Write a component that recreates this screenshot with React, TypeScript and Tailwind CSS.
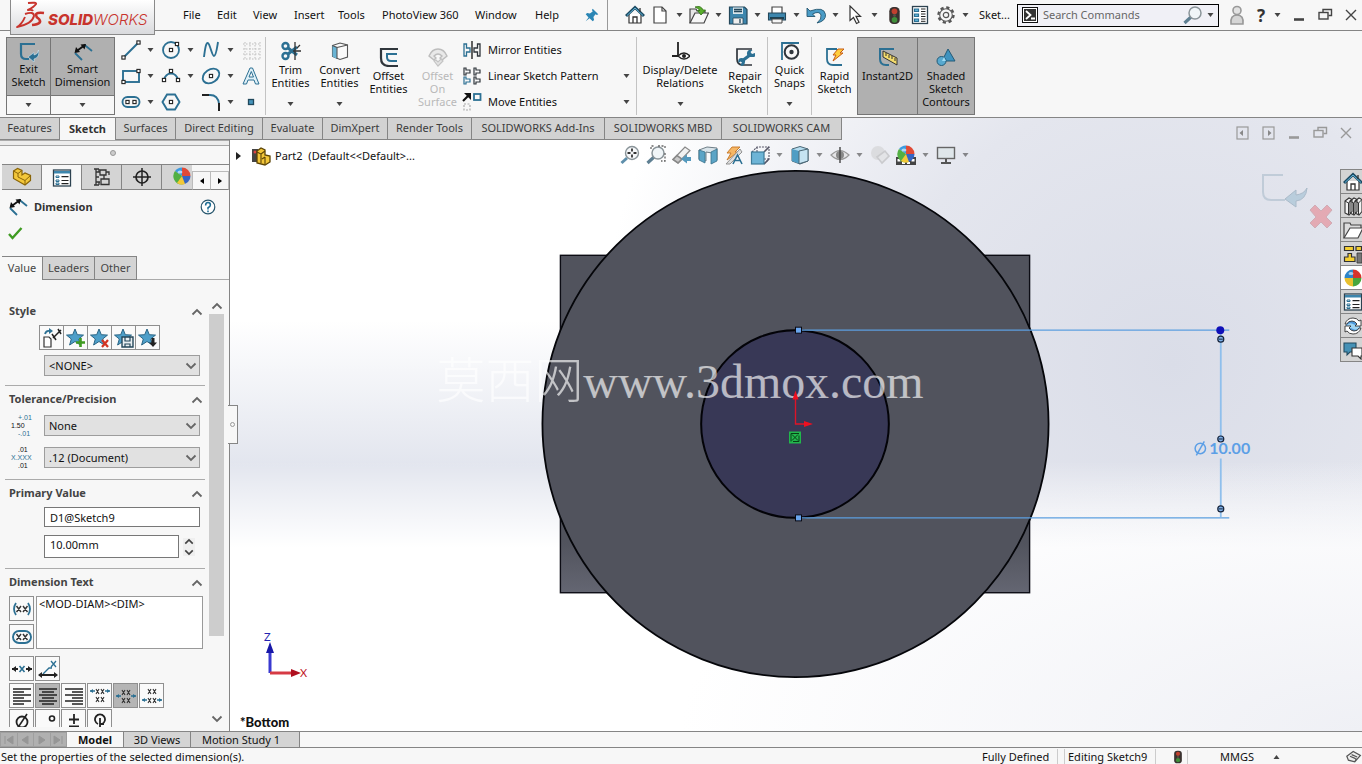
import React from "react";

type Kids = { children?: React.ReactNode };

const B = "#2c7093";
const K = "#30363c";
const L = "#5fb3d9";

function Ic({ s = 20, children, className = "" }: Kids & { s?: number; className?: string }) {
  return (
    <svg width={s} height={s} viewBox="0 0 20 20" fill="none" strokeWidth="1.6" className={"shrink-0 " + className} aria-hidden="true">
      {children}
    </svg>
  );
}

function Caret({ className = "" }: { className?: string }) {
  return (
    <svg width="7" height="4" viewBox="0 0 7 4" className={"shrink-0 " + className} aria-hidden="true">
      <path d="M0.5 0h6L3.5 4z" fill="#444" />
    </svg>
  );
}

const Node = ({ x, y }: { x: number; y: number }) => (
  <rect x={x - 1.6} y={y - 1.6} width="3.2" height="3.2" fill="#fff" stroke="#222" strokeWidth="1.1" />
);

/* ---------- icons ---------- */

const ExitSketch = () => (
  <Ic>
    <path d="M16 2H2v10q0 5 5 5h3" stroke={B} strokeWidth="2.200" />
    <path d="M9 15l6-4.500v2.500q4-.500 4.500-5Q21 15.500 15 17v3z" fill={B} stroke="#cfe6f2" strokeWidth=".6" />
  </Ic>
);
const DimIcon = () => (
  <Ic>
    <path d="M11 2.500l8 6.500M2 11l7 7" stroke={B} strokeWidth="1.800" />
    <path d="M3 9.500L12 3" stroke="#111" strokeWidth="2" />
    <path d="M1.500 11l1.500-6 4 5zM13 2l-1.500 5.500-4-5z" fill="#111" />
  </Ic>
);
const LineI = () => (
  <Ic><path d="M2.500 17.500L17.500 2.500" stroke={B} strokeWidth="2" /><Node x={2.500} y={17.500} /><Node x={17.500} y={2.500} /></Ic>
);
const CircleI = () => (
  <Ic><circle cx="10" cy="10" r="8" stroke={B} strokeWidth="1.800" /><Node x={10} y={10} /><Node x={16} y={4} /></Ic>
);
const SplineI = () => (
  <Ic><path d="M3 17C4 9 5 2 7 3s4 13 6 13 3-8 4-14" stroke={B} strokeWidth="1.900" /></Ic>
);
const GridI = () => (
  <Ic><path d="M4 2v17M9 2v17M14 2v17M19 2v17M2 4h17M2 9h17M2 14h17M2 19h17" stroke="#bdbdbd" strokeWidth="1" strokeDasharray="1.500 1.500" /></Ic>
);
const RectI = () => (
  <Ic><rect x="2" y="5" width="16" height="11" stroke={B} strokeWidth="1.900" /><Node x={2.500} y={16} /><Node x={17.500} y={5} /></Ic>
);
const ArcI = () => (
  <Ic><path d="M3 14A7.200 8.500 0 0 1 17 14" stroke={B} strokeWidth="1.900" /><Node x={3} y={14} /><Node x={17} y={14} /><Node x={10} y={5} /></Ic>
);
const EllipseI = () => (
  <Ic><ellipse cx="10" cy="10" rx="9" ry="6.500" transform="rotate(-35 10 10)" stroke={B} strokeWidth="1.900" /><Node x={10} y={10} /></Ic>
);
const TextI = () => (
  <Ic><path d="M2 18L9 2h2.500l6.500 16h-3.500l-1.500-4H7l-1.500 4zM8 11h4.500L10.300 5.500z" stroke={B} strokeWidth="1" fill="#dff0f8" /></Ic>
);
const SlotI = () => (
  <Ic><rect x="1.500" y="5" width="17" height="10" rx="5" stroke={B} strokeWidth="1.900" /><Node x={6.500} y={10} /><Node x={13.500} y={10} /></Ic>
);
const HexI = () => (
  <Ic><path d="M6 2.500h8L18.500 10 14 17.500H6L1.500 10z" stroke={B} strokeWidth="1.900" /><Node x={10} y={10} /></Ic>
);
const FilletI = () => (
  <Ic><path d="M1 3h8q8 0 9 9" stroke={B} strokeWidth="1.900" /><path d="M1 3h7M18 11v8" stroke="#222" strokeWidth="2" /></Ic>
);
const PointI = () => (
  <Ic><rect x="7.500" y="7.500" width="5" height="5" fill="#4694bb" stroke="#20485c" strokeWidth="1.300" /></Ic>
);
const TrimI = () => (
  <Ic>
    <circle cx="4.500" cy="5" r="3" stroke={B} strokeWidth="2.400" /><circle cx="4.500" cy="15" r="3" stroke={B} strokeWidth="2.400" />
    <path d="M7 7l9 7M7 13l9-7" stroke={B} strokeWidth="3" /><path d="M14 1v18M12 10h8M16 7l3-3" stroke="#333" strokeWidth="1.300" />
  </Ic>
);
const CubeI = ({ side = "#69b4d4" }: { side?: string }) => (
  <Ic>
    <path d="M2.500 4.500L10 2l7.500 2v12L10 18.500 2.500 15.500z" fill="#fafafa" stroke="#555" strokeWidth="1.100" />
    <path d="M7 6l-4.500-1.500v11L7 18z" fill={side} /><path d="M7 6.500L17.500 4M7 6.500V18M2.500 4.500L7 6.500" stroke="#555" strokeWidth="1.100" />
  </Ic>
);
const OffsetI = () => (
  <Ic><path d="M19 2H2v9q0 8 8 8h9" stroke={K} strokeWidth="2.200" /><path d="M18 7H8v3q0 4 4 4h6" stroke={B} strokeWidth="2" /></Ic>
);
const OffSurfI = () => (
  <Ic><path d="M1 9Q4 2 10 2t9 7l-5 4-2-2 2-2q-4-4-8 0l2 2-2 2z" stroke="#bdbdbd" fill="#e9e9e9" strokeWidth="1.400" /><path d="M6 14l4 5 5-5-2-2-3 3-2-2z" stroke="#c4c4c4" fill="#e4e4e4" strokeWidth="1.200" /></Ic>
);
const MirrorI = () => (
  <Ic><path d="M2 4v12h2.500v-4H8V8H4.500V4z" stroke={B} strokeWidth="1.300" /><path d="M18 4v12h-2.500v-4H12V8h3.500V4z" stroke={K} strokeWidth="1.300" /><path d="M10 1v18" stroke="#111" strokeWidth="1.300" /></Ic>
);
const PatternI = () => (
  <Ic>
    <path d="M2 2v7h2V7h4V4H4V2zM12 2v7h2V7h4V4h-4V2zM12 11v7h2v-2h4v-3h-4v-2z" stroke={K} strokeWidth="1.200" />
    <path d="M2 11v7h2v-2h4v-3H4v-2z" stroke={B} strokeWidth="1.200" />
  </Ic>
);
const MoveI = () => (
  <Ic><path d="M1 9l5-5" stroke="#111" strokeWidth="2.200" /><path d="M2 1h7v7z" fill="#111" /><rect x="12" y="2" width="6.500" height="6" stroke={B} strokeWidth="1.800" /><rect x="2" y="12" width="6" height="6" stroke="#aaa" strokeWidth="1.200" strokeDasharray="2 1.500" /></Ic>
);
const RelI = () => (
  <Ic><path d="M8 1v14M2 15h8" stroke="#222" strokeWidth="1.800" /><path d="M8 15q6-6 12 0-6 6-12 0z" fill="#fff" stroke="#222" strokeWidth="1.300" /><circle cx="14" cy="15" r="2" fill="#222" /></Ic>
);
const RepairI = () => (
  <Ic><path d="M17 2H2v10q0 6 6 6h9" stroke={K} strokeWidth="1.700" /><path d="M7 14l8-6" stroke={B} strokeWidth="3.200" /><path d="M20 6l-3 1-1.500-2 2-2q-5-1-5.500 3t5 4 3-4zM3.500 16q-1-5 3-5t3.500 4-3.500 4l-1-1.500 1.500-2-1.500-1z" fill={B} /></Ic>
);
const SnapI = () => (
  <Ic><path d="M2 19V2h17" stroke={B} strokeWidth="1.800" /><circle cx="11.500" cy="11" r="6.800" stroke={K} strokeWidth="2" /><circle cx="11.500" cy="11" r="2.200" fill={K} /></Ic>
);
const RapidI = () => (
  <Ic><path d="M12 2H2v10q0 6 6 6h9" stroke={B} strokeWidth="1.800" /><path d="M13 2h6l-4 4h3L8 14l3-6H8z" fill="#ffce3d" stroke="#c75a12" strokeWidth="1" /></Ic>
);
const InstI = () => (
  <Ic><path d="M16 2H2v10q0 6 6 6h3" stroke={B} strokeWidth="2" /><path d="M5 4v6l14 8v-7z" fill="#f4dc6c" stroke="#333" strokeWidth="1" /><path d="M8 6v3M11 8v3M14 9v3M17 11v3" stroke="#333" strokeWidth="1" /></Ic>
);
const ShadedI = () => (
  <Ic><path d="M12 2l7 12H6z" fill="#3f93bf" stroke="#245a76" strokeWidth="1" /><circle cx="5.500" cy="14" r="4.500" fill="#58a9cf" stroke="#245a76" strokeWidth="1" /><path d="M8 10l2 4H6z" fill="#9edcf5" /></Ic>
);
const HomeI = () => (
  <Ic><path d="M4 9v9h12V9" fill="#fff" stroke="#333" strokeWidth="1.200" /><path d="M1 11l9-8.500 9 8.500" stroke="#1c4a62" strokeWidth="3" /><path d="M2 10.500l8-7.500 8 7.500" stroke={L} strokeWidth="1" /><path d="M8 18v-6h4v6M15 3v4" stroke="#333" strokeWidth="1.300" /></Ic>
);
const NewI = () => (
  <Ic><path d="M4 2h8l4 4v12H4z" fill="#fff" stroke="#444" strokeWidth="1.200" /><path d="M12 2v4h4" stroke="#444" strokeWidth="1.200" /></Ic>
);
const OpenI = () => (
  <Ic><path d="M1 18V4h6l1 2h8v3" fill="#e6e6e6" stroke="#444" strokeWidth="1.200" /><path d="M1 18L6 8h13.500L15 18z" fill="#f7f7f7" stroke="#444" strokeWidth="1.200" /><path d="M6 2q6-2 8 3h2.500L12 10 8.500 5.500H11Q9 3 6 2z" fill="#59ae2c" stroke="#2f6d14" strokeWidth=".8" /></Ic>
);
const SaveI = () => (
  <Ic><path d="M1.500 2h15L19 4.500V19H1.500z" fill="#3d86ad" stroke="#24475a" strokeWidth="1.200" /><path d="M5 2.500h10V9H5z" fill="#d9e6ec" /><path d="M5 13h10v6H5z" fill="#eee" stroke="#24475a" strokeWidth=".8" /><path d="M12 14v4M6 4.500h8M6 6.500h8" stroke="#24475a" strokeWidth="1.300" /></Ic>
);
const PrintI = () => (
  <Ic><path d="M5 8V2h10v6" fill="#fff" stroke="#444" strokeWidth="1.200" /><path d="M1.500 8h17v7h-17z" fill="#3d86ad" stroke="#24475a" strokeWidth="1.100" /><path d="M3 13h14" stroke="#122a36" strokeWidth="1.500" /><path d="M5 14h10v4H5z" fill="#f5f5f5" stroke="#444" strokeWidth="1" /></Ic>
);
const UndoI = () => (
  <Ic><path d="M1 3v8.500h8L6.500 9q7-3.500 8.500 1 1 4-4 8 9-2 8.500-8.500Q18 1 4 6z" fill="#4a9cc7" stroke="#24566f" strokeWidth=".9" /></Ic>
);
const CursorI = () => (
  <Ic><path d="M5 1v14.500l3.500-3 3 6 2.500-1.200-3-6h4.500z" fill="#fff" stroke="#333" strokeWidth="1.200" /></Ic>
);
const TrafficI = ({ s = 20 }: { s?: number }) => (
  <Ic s={s}><rect x="4.500" y="1" width="11" height="18" rx="4.500" fill="#3a3230" /><circle cx="10" cy="5.500" r="3" fill="#c2402f" /><circle cx="10" cy="10" r="1.500" fill="#5a5046" /><circle cx="10" cy="14.500" r="3" fill="#3f8f3a" /></Ic>
);
const ListI = ({ s = 20 }: { s?: number }) => (
  <Ic s={s}><rect x="1.500" y="2" width="17" height="16" fill="#fff" stroke="#2d4250" strokeWidth="1.300" /><path d="M2 3h16v2.500H2z" fill="#3d86ad" /><path d="M4 8h3v1.500H4zM4 12h3v1.500H4zM4 15h3v1.500H4z" stroke={B} strokeWidth="1" /><path d="M9.500 8.700h7M9.500 12.500h7M9.500 15.700h7" stroke="#222" strokeWidth="1.200" /></Ic>
);
const PropsI = () => (
  <Ic><rect x="2.500" y="1.500" width="15" height="17" fill="#fff" stroke="#2d4250" strokeWidth="1.300" /><path d="M4.500 4h4v2.500h-4zM4.500 9h4v2.500h-4zM4.500 14h4v2.500h-4z" fill={L} stroke={B} strokeWidth="1.200" /><path d="M11 4h4.500M11 6.500h4.500M11 9h4.500M11 11.500h4.500M11 14h4.500M11 16.300h4.500" stroke="#222" strokeWidth="1" /></Ic>
);
const GearI = () => (
  <Ic><circle cx="10" cy="10" r="7.500" stroke="#555" strokeWidth="2.400" strokeDasharray="3.200 2.690" /><circle cx="10" cy="10" r="6.300" fill="#f7f7f7" stroke="#555" strokeWidth="1.100" /><circle cx="10" cy="10" r="2.700" stroke="#555" strokeWidth="1.200" /></Ic>
);
const PinI = () => (
  <Ic s={14}><path d="M11 1l8 8-2 1-2-1-3 4 1 4-2 2-4.500-4.500L1 19l4-5.500L1 9l2-2 4 1 4-3-1-2z" fill="#2b86b5" /></Ic>
);
const MagI = ({ dashed = false }: { dashed?: boolean }) => (
  <Ic><path d="M8 12l-6.500 6" stroke="#5e7f92" strokeWidth="3.200" /><circle cx="12" cy="8" r="6" fill="#f0f5f8" stroke="#8a9499" strokeWidth="1.500" />{dashed && <path d="M5 4V1h3M12 1h7v3M19 8v8h-4" stroke="#666" strokeWidth="1.300" strokeDasharray="2 1.500" />}</Ic>
);
const ZoomFitI = () => (
  <Ic><path d="M7 13l-5.500 5" stroke="#5e8fab" strokeWidth="3" /><circle cx="12" cy="8" r="6.500" fill="#f6f8fa" stroke="#8a9499" strokeWidth="1.400" /><path d="M12 3.500v3M12 9.500v3M7.500 8h3M13.500 8h3" stroke="#333" strokeWidth="1.800" /></Ic>
);
const PrevViewI = () => (
  <Ic><path d="M1 14.500L13 2l5 3.500L6 18z" fill="#f2f2f2" stroke="#888" strokeWidth="1.200" /><path d="M1 14.500l4-4 5 3.500-4 4z" fill="#c9c9c9" stroke="#888" /><path d="M9 14l6-4.500V12h4v4h-4v2.500z" fill="#5599bd" /></Ic>
);
const SectionI = () => (
  <Ic><path d="M1 5l8-3 10 1v12l-5 3V8L8 7v9l-7-2z" fill="#d9e4ea" stroke="#6f7e87" strokeWidth="1" /><path d="M1 5l6 2v11l-6-3zM13 7l6-3v12l-6 3z" fill="#5ba4c6" stroke="#39718c" strokeWidth=".8" /></Ic>
);
const DynI = () => (
  <Ic><path d="M8 2h8l-5 5h3L3 15l4-7H3z" fill="#f6b765" stroke="#c47524" strokeWidth=".9" /><path d="M2 19L16 4l2 3L6 19z" fill="#ddd" stroke="#888" strokeWidth=".9" /><path d="M9 19l4.500-9 4.500 9M11 15.500h5" stroke={B} strokeWidth="1.600" /></Ic>
);
const OrientI = () => (
  <Ic><path d="M2 7l5-5h12v12l-5 5M7 2v5M14 14h5" stroke="#556" strokeWidth="1.100" strokeDasharray="2 1" /><path d="M14 7l5-5M19 14l-5 5" stroke="#556" /><rect x="1.500" y="7" width="12.500" height="12" fill="#6db4d6" stroke="#3f7c99" strokeWidth="1.200" /></Ic>
);
const StyleCubeI = () => (
  <Ic><path d="M2 4l8-2.500L18 4v12l-8 3-8-3z" fill="#b4dcef" stroke="#4a6674" strokeWidth="1" /><path d="M2 4l7 2v12.500L2 16z" fill="#4f9dc4" /><path d="M9 6l9-2v12l-9 2.800z" fill="#c6e4f2" stroke="#4a6674" strokeWidth="1" /></Ic>
);
const EyeI = () => (
  <Ic><path d="M1 10q9-9 18 0-9 9-18 0z" fill="#e4e4e6" stroke="#999" strokeWidth="1.200" /><circle cx="10" cy="10" r="4" fill="#888" /><path d="M10 2v16" stroke="#444" strokeWidth="1.400" /></Ic>
);
const BallI = ({ s = 20, strip = false }: { s?: number; strip?: boolean }) => (
  <Ic s={s}>
    {strip && <path d="M0 12h20v8H0z" fill="#444" />}
    {strip && <path d="M1.500 14h3v2.500h-3zM6 17h3v2H6zM11 17h3v2h-3zM15.500 14h3v2.500h-3z" fill="#fff" />}
    <path d="M10 9L3 4a8.500 8.500 0 0 1 7-3.500z" fill="#3d9be0" /><path d="M10 9V.5A8.500 8.500 0 0 1 18.500 9z" fill="#e04a36" />
    <path d="M10 9h8.500A8.500 8.500 0 0 1 10 17.500z" fill="#3565c4" /><path d="M10 9v8.500A8.500 8.500 0 0 1 3 4z" fill="#52b043" /><path d="M10 9l3 8a8.500 8.500 0 0 1-8-1z" fill="#f2c838" />
    <ellipse cx="8" cy="5" rx="2.500" ry="1.600" fill="#fff" opacity=".6" />
  </Ic>
);
const PaneBallI = () => (
  <Ic><path d="M10 10V1.500a8.500 8.500 0 0 0-8.500 8.500z" fill="#2f86c9" /><path d="M10 10V1.500a8.500 8.500 0 0 1 8.500 8.500z" fill="#d5342b" /><path d="M10 10h8.500a8.500 8.500 0 0 1-8.500 8.500z" fill="#46a63d" /><path d="M10 10H1.500a8.500 8.500 0 0 0 8.500 8.500z" fill="#e8c02e" /><ellipse cx="8" cy="5.500" rx="2.500" ry="1.600" fill="#fff" opacity=".6" /></Ic>
);
const GhostI = () => (
  <Ic className="opacity-50"><circle cx="8" cy="8" r="7" fill="#ccc" /><path d="M7 12l8-6 4 5-7 7z" fill="#ddd" stroke="#aaa" /></Ic>
);
const ScreenI = () => (
  <Ic><rect x="1.500" y="2.500" width="17" height="11" fill="#dfe6ea" stroke="#666" strokeWidth="1.400" /><path d="M10 14v3M5 18h10" stroke="#555" strokeWidth="2" /></Ic>
);
const PartI = () => (
  <Ic><path d="M1.500 4l4-2.500L10 3.500V8l3-2 5.500 2.500v5L13 18 1.500 11.500z" fill="#f3c73a" stroke="#8a6508" strokeWidth="1.200" /><path d="M1.500 4L6 6.500 10 3.500M6 6.500V10l7 3.500 5.500-5M13 13.500V18" stroke="#8a6508" strokeWidth="1" /></Ic>
);
const PartTreeI = () => (
  <Ic><path d="M1 3h6v13H1z" fill="#444" /><circle cx="4" cy="6" r="1.500" fill="#d44" /><path d="M6 5l4-3 4 2v5l5 1v6l-5 3-8-2z" fill="#f3c73a" stroke="#5c4406" strokeWidth="1.300" /><path d="M6 6l4 2v9M10 8l4-3M14 11l-3 2M14 11v7" stroke="#5c4406" strokeWidth="1.100" /></Ic>
);
const TreeI = () => (
  <Ic><path d="M4 2v16M2 2h5M2 18h5M7 2v3M4 10h3M7 15v3M4 5h4M4 15h4" stroke="#333" strokeWidth="1.300" /><path d="M8 3h6v5H8zM9 12h8v5.500H9zM14 5h3v3M12 8v4" stroke="#333" strokeWidth="1.300" /></Ic>
);
const TargetI = () => (
  <Ic><circle cx="10" cy="10" r="6" stroke="#222" strokeWidth="1.700" /><path d="M10 1v18M1 10h18" stroke="#222" strokeWidth="1.500" /></Ic>
);
const HelpI = () => (
  <Ic s={16}><circle cx="10" cy="10" r="8.500" fill="#fff" stroke="#27566d" strokeWidth="1.500" /><path d="M7 8q0-3.500 3-3.500T13 7.500q0 2-3 3.500v2M10 14.500v2" stroke="#1d6d94" strokeWidth="1.900" /></Ic>
);
const star = "M9 1l2.300 5.700 6.200.4-4.800 3.900 1.700 6L9 13.500 3.600 17l1.700-6L.5 7.100l6.200-.4z";
const StarI = ({ children }: Kids) => (
  <Ic><path d={star} fill="#4e9fc9" stroke="#2a6585" strokeWidth="1" />{children}</Ic>
);
const BooksI = () => (
  <Ic><path d="M2 5l4-3 3 1.500v12L6 19l-4-2zM7 5l4-3 3 1.500v12L11 19l-4-2zM12 5l4-3 3 1.500v12L16 19l-4-2z" fill="#f2f2f2" stroke="#333" strokeWidth="1.100" /><path d="M2 5l3.500 2L9 3.500M5.500 7v11.500M7 5l3.500 2L14 3.500M10.500 7v11.500M12 5l3.500 2L19 3.500M15.500 7v11.500" stroke="#333" strokeWidth="1" /></Ic>
);
const FolderI = () => (
  <Ic><path d="M1 18V3h6l1 2h10v3" fill="#dcdcdc" stroke="#444" strokeWidth="1.200" /><path d="M1 18L7 8h13l-5 10z" fill="#fff" stroke="#444" strokeWidth="1.200" /></Ic>
);
const PaletteI = () => (
  <Ic><path d="M1.500 2.500h9v4h-9zM13 2.500h5.500v4H13zM5 9.500h3.500V13H12v4.500H1.500V13H5z" fill="#f5d033" stroke="#333" strokeWidth="1.200" /><path d="M14 9h5v10h-5z" fill="#777" stroke="#333" strokeWidth=".8" /></Ic>
);
const SyncI = () => (
  <Ic><circle cx="10" cy="10" r="7" fill="#4d97d8" /><path d="M4 9q3-3 6-1t6 0v4q-3 3-6 1t-6 0z" fill="#9fd4f2" /><path d="M2 8q2-6 8-6 4 0 6 3l2-1v6h-6l2-2q-2-3-5-3-4 0-5 3zM18 12q-2 6-8 6-4 0-6-3l-2 1v-6h6l-2 2q2 3 5 3 4 0 5-3z" fill="#fff" stroke="#333" strokeWidth=".9" /></Ic>
);
const ChatI = () => (
  <Ic><path d="M1 3h12v9H7l-3 3v-3H1z" fill="#4591b5" stroke="#234b5f" strokeWidth="1.100" /><path d="M9 8h10v8h-1v3l-3-3H9z" fill="#fff" stroke="#333" strokeWidth="1.100" /></Ic>
);

/* ---------- ribbon parts ---------- */

function BigTool({ icon, lines, caret = false, className = "", active = false, muted = false }: { icon: React.ReactNode; lines: string[]; caret?: boolean; className?: string; active?: boolean; muted?: boolean }) {
  return (
    <button
      type="button"
      className={
        "flex h-[78px] shrink-0 flex-col items-center text-[11px] leading-[13px] " +
        (caret ? "pt-1 " : active ? "border border-[#757575] bg-[#b0b0b0] pt-[9px] " : "pt-[10px] ") +
        (muted ? "text-[#b9b9b9] " : "") + className
      }
    >
      {icon}
      <span className="mt-0.5 flex flex-col items-center">
        {lines.map((t) => <span key={t} className="whitespace-nowrap">{t}</span>)}
      </span>
      {caret && <Caret className="mt-auto mb-[9px]" />}
    </button>
  );
}

function SplitTool({ icon, lines, className }: { icon: React.ReactNode; lines: string[]; className: string }) {
  return (
    <div className={"flex h-[78px] shrink-0 flex-col border border-[#757575] text-[11px] leading-[13px] " + className}>
      <button type="button" className="flex h-[58px] flex-col items-center border-b border-[#757575] bg-[#b0b0b0] pt-1">
        {icon}
        {lines.map((t) => <span key={t}>{t}</span>)}
      </button>
      <button type="button" aria-label={lines.join(" ") + " options"} className="flex flex-1 items-center justify-center"><Caret /></button>
    </div>
  );
}

const Rule = () => <div className="h-[78px] w-px shrink-0 bg-[#c3c3c3]" />;

const sketchTools: [string, React.ReactNode, boolean][] = [
  ["Line", <LineI />, true], ["Circle", <CircleI />, true], ["Spline", <SplineI />, true], ["Grid", <GridI />, false],
  ["Rectangle", <RectI />, true], ["Arc", <ArcI />, true], ["Ellipse", <EllipseI />, true], ["Text", <TextI />, false],
  ["Slot", <SlotI />, true], ["Polygon", <HexI />, false], ["Fillet", <FilletI />, true], ["Point", <PointI />, false],
];

function Ribbon() {
  return (
    <div className="flex h-[87px] shrink-0 items-start border-b border-[#858585] bg-[#f7f7f7] pt-1.5 pl-1.5">
      <SplitTool icon={<ExitSketch />} lines={["Exit", "Sketch"]} className="w-[45px]" />
      <SplitTool icon={<DimIcon />} lines={["Smart", "Dimension"]} className="-ml-px w-[65px]" />
      <div className="ml-1.5 grid h-[78px] w-[144px] shrink-0 grid-cols-[40px_40px_40px_24px] grid-rows-3">
        {sketchTools.map(([name, icon, caret]) => (
          <button key={name} type="button" aria-label={name} className="flex items-center gap-1.5">
            {icon}{caret && <Caret />}
          </button>
        ))}
      </div>
      <Rule />
      <BigTool icon={<TrimI />} lines={["Trim", "Entities"]} caret className="w-[49px]" />
      <BigTool icon={<CubeI />} lines={["Convert", "Entities"]} caret className="w-[49px]" />
      <BigTool icon={<OffsetI />} lines={["Offset", "Entities"]} className="w-[49px]" />
      <BigTool icon={<OffSurfI />} lines={["Offset", "On", "Surface"]} muted className="w-[49px]" />
      <div className="grid h-[78px] w-[174px] shrink-0 grid-rows-3 text-[11px]">
        {([["Mirror Entities", <MirrorI />, false], ["Linear Sketch Pattern", <PatternI />, true], ["Move Entities", <MoveI />, true]] as [string, React.ReactNode, boolean][]).map(([t, i, c]) => (
          <button key={t} type="button" className="flex items-center gap-1.5 pr-1.5 whitespace-nowrap">
            {i}<span>{t}</span>{c && <Caret className="ml-auto" />}
          </button>
        ))}
      </div>
      <Rule />
      <BigTool icon={<RelI />} lines={["Display/Delete", "Relations"]} caret className="w-[86px]" />
      <BigTool icon={<RepairI />} lines={["Repair", "Sketch"]} className="w-[44px]" />
      <Rule />
      <BigTool icon={<SnapI />} lines={["Quick", "Snaps"]} caret className="w-[43px]" />
      <Rule />
      <BigTool icon={<RapidI />} lines={["Rapid", "Sketch"]} className="w-[45px]" />
      <BigTool icon={<InstI />} lines={["Instant2D"]} active className="w-[61px]" />
      <BigTool icon={<ShadedI />} lines={["Shaded", "Sketch", "Contours"]} active className="-ml-px w-[58px]" />
    </div>
  );
}

/* ---------- title bar ---------- */

function Logo() {
  return (
    <div className="absolute top-0 left-2.5 z-20 flex h-[35px] w-[145px] items-center border border-t-0 border-[#8a8a8a] bg-linear-to-b from-white to-[#d9dadd] pl-1 text-[#c8332c]">
      <svg width="32" height="32" viewBox="0 0 32 32" fill="none" stroke="#c8332c" strokeWidth="2" strokeLinejoin="round" aria-hidden="true">
        <path d="M13 2q9-1 8 1-2 3-8 6 4-1 5 1" strokeWidth="2" /><path d="M10 13q9-3 9 2-2 8-17 11 5-3 8-10" strokeWidth="1.900" />
        <path d="M29 12q-8-1-8 2 0 2 3 4 4 5-7 6" strokeWidth="2.600" />
      </svg>
      <span className="pt-1 pl-px font-['Inter','Liberation_Sans',sans-serif] text-[15px] leading-none italic"><b className="font-extrabold">SOLID</b><span className="font-light">WORKS</span></span>
    </div>
  );
}

const menus = [
  ["File", "w-[34px]"], ["Edit", "w-[36px]"], ["View", "w-[41px]"], ["Insert", "w-[44px]"], ["Tools", "w-[44px]"],
  ["PhotoView 360", "w-[93px]"], ["Window", "w-[60px]"], ["Help", "w-[50px]"],
];

const quick: [string, React.ReactNode][] = [
  ["New", <NewI />], ["Open", <OpenI />], ["Save", <SaveI />], ["Print", <PrintI />], ["Undo", <UndoI />], ["Select", <CursorI />],
];

function WinButtons({ color }: { color: string }) {
  return (
    <svg width="66" height="14" viewBox="0 0 66 14" fill="none" stroke={color} strokeWidth="1.400" aria-hidden="true">
      <path d="M1 11.500h10" strokeWidth="2.600" /><path d="M30 4V1.500h8.500v6H35.500" /><rect x="26" y="4.500" width="9" height="6.500" /><path d="M53 2l10 10M63 2L53 12" />
    </svg>
  );
}

function TitleBar() {
  return (
    <header className="relative flex h-[31px] shrink-0 items-center border-b border-[#858585] bg-[#f7f7f7] text-[11px]">
      <Logo />
      <nav className="flex h-full w-[608px] shrink-0 items-center border-r border-[#999] pl-[183px]">
        {menus.map(([m, w]) => <button key={m} type="button" className={"text-left whitespace-nowrap " + w}>{m}</button>)}
        <button type="button" aria-label="Pin menu"><PinI /></button>
      </nav>
      <div className="flex items-center pl-[17px]">
        <button type="button" aria-label="Home" className="mr-[5px]"><HomeI /></button>
        {quick.map(([n, i]) => (
          <button key={n} type="button" aria-label={n} className="flex w-[39px] items-center gap-1.5">{i}<Caret /></button>
        ))}
        <button type="button" aria-label="Rebuild" className="ml-px"><TrafficI s={19} /></button>
        <button type="button" aria-label="File properties" className="ml-1.5"><PropsI /></button>
        <button type="button" aria-label="Options" className="ml-1.5 flex w-[39px] items-center gap-1.5"><GearI /><Caret /></button>
        <span className="ml-1 whitespace-nowrap">Sket...</span>
      </div>
      <div className="ml-auto flex items-center">
        <label className="flex h-[23px] w-[202px] items-center border border-black bg-[#f0f0f6] pr-1 pl-1">
          <svg width="16" height="16" viewBox="0 0 16 16" fill="none" aria-hidden="true"><rect x=".5" y=".5" width="15" height="15" fill="#fff" stroke="#111" /><rect x="2" y="2" width="12" height="12" fill="#333" /><path d="M4 4l4.500 4L4 12M9 11.500h4" stroke="#fff" strokeWidth="1.800" /></svg>
          <input aria-label="Search Commands" placeholder="Search Commands" className="ml-[5px] min-w-0 flex-1 bg-transparent outline-none placeholder:text-[#666]" />
          <MagI /><Caret className="ml-1" />
        </label>
        <button type="button" aria-label="Account" className="ml-2">
          <Ic><path d="M4 19q-1-9 6-9t6 9z" fill="#d5d5d5" stroke="#999" /><circle cx="10" cy="5.500" r="4" fill="#e2e2e2" stroke="#999" /></Ic>
        </button>
        <button type="button" aria-label="Help menu" className="ml-2.5 flex items-center gap-[9px] text-[17px] leading-none font-bold text-[#333]">?<Caret /></button>
        <div className="ml-3 pr-[3px]"><WinButtons color="#444" /></div>
      </div>
    </header>
  );
}

/* ---------- command tabs ---------- */

const tabs = [
  ["Features", "w-[60px]"], ["Sketch", "w-[56px]"], ["Surfaces", "w-[60px]"], ["Direct Editing", "w-[87px]"], ["Evaluate", "w-[60px]"], ["DimXpert", "w-[65px]"],
  ["Render Tools", "w-[84px]"], ["SOLIDWORKS Add-Ins", "w-[133px]"], ["SOLIDWORKS MBD", "w-[117px]"], ["SOLIDWORKS CAM", "w-[120px]"],
];

function CommandTabs() {
  return (
    <div className="flex h-[22px] shrink-0 items-stretch text-[11px]">
      {tabs.map(([t, w]) => (
        <button key={t} type="button" className={w + " shrink-0 border-r border-[#858585] whitespace-nowrap " + (t === "Sketch" ? "bg-[#f7f7f7] font-bold text-[#333]" : "border-b bg-[#d2d2d2] text-[#3c3c3c]")}>{t}</button>
      ))}
      <div className="ml-auto flex items-center gap-3 pt-2 pr-2">
        <svg width="40" height="14" viewBox="0 0 40 14" fill="none" stroke="#999" strokeWidth="1.200" aria-hidden="true">
          <rect x="1" y="1" width="11" height="12" /><rect x="27" y="1" width="11" height="12" /><path d="M7 4v6L3.500 7zM32 4v6l3.500-3z" fill="#888" stroke="none" />
        </svg>
        <WinButtons color="#999" />
      </div>
    </div>
  );
}

/* ---------- property manager ---------- */

const Chevron = ({ down = false, className = "" }: { down?: boolean; className?: string }) => (
  <svg width="12" height="8" viewBox="0 0 12 8" fill="none" stroke="#666" strokeWidth="1.800" className={"shrink-0 " + className} aria-hidden="true">
    <path d={down ? "M1.500 1.500L6 6l4.500-4.500" : "M1.500 6.500L6 2l4.500 4.500"} />
  </svg>
);

function Group({ title, first = false, children }: Kids & { title: string; first?: boolean }) {
  return (
    <section className={"ml-[5px] mr-1 " + (first ? "" : "border-t border-[#ababab]")}>
      <button type="button" className="flex h-[27px] w-full items-center justify-between pr-0.5 pl-1 text-[11px] font-bold text-[#444]">
        {title}<Chevron />
      </button>
      {children}
    </section>
  );
}

function Drop({ value, label, className = "" }: { value: string; label: string; className?: string }) {
  return (
    <div className={"relative w-[156px] " + className}>
      <select aria-label={label} defaultValue={value} className="block h-[21px] w-full appearance-none rounded-none border border-[#9d9d9d] bg-[#e1e1e1] px-1 text-[11px] leading-[18px]">
        <option>{value}</option>
      </select>
      <Chevron down className="pointer-events-none absolute top-[7px] right-[3px]" />
    </div>
  );
}

function Sq({ label, on = false, className = "", children }: Kids & { label: string; on?: boolean; className?: string }) {
  return (
    <button type="button" aria-label={label} className={"flex size-[25px] shrink-0 items-center justify-center border border-[#8f8f8f] " + (on ? "bg-[#b5b5b5] " : "bg-[#fafafa] ") + className}>
      {children}
    </button>
  );
}

const Align = ({ d }: { d: string }) => <Ic><path d={d} stroke="#222" strokeWidth="1.700" /></Ic>;

const XX = ({ a, b, arrows }: { a: number; b: number; arrows: number }) => (
  <Ic>
    <g stroke="#333" strokeWidth="1.100">
      <path d={`M6 ${a}l3 5M9 ${a}l-3 5M11 ${a}l3 5M14 ${a}l-3 5`} /><path d={`M6 ${b}l3 5M9 ${b}l-3 5M11 ${b}l3 5M14 ${b}l-3 5`} />
    </g>
    <path d={`M0 ${arrows}h5M15 ${arrows}h5`} stroke={B} strokeWidth="1.400" /><path d={`M3 ${arrows - 2}v4l-3-2zM17 ${arrows - 2}v4l3-2z`} fill={B} />
  </Ic>
);

/* Three-line numeral glyph shown beside the tolerance drop-downs. */
function NumberGlyph({ rows }: { rows: [string, boolean][] }) {
  return (
    <svg width="39" height="25" viewBox="0 0 39 25" className="shrink-0" aria-hidden="true">
      {rows.map(([t, blue], i) => (
        <text key={i} x={i === 1 ? 6 : 13} y={7 + i * 8} className={"font-['Liberation_Sans',sans-serif] text-[7px] " + (blue ? "fill-[#2c7093]" : "fill-[#111]")}>{t}</text>
      ))}
    </svg>
  );
}

function PropertyManager() {
  return (
    <aside className="relative flex w-[230px] shrink-0 flex-col border-r border-[#858585] bg-[#f7f7f7]">
      <div className="flex h-5 shrink-0 items-center justify-center border-t border-[#aaa] pr-1 shadow-[inset_0_4px_0_#ececec,inset_0_5px_0_#a5a5a5]">
        <span className="mt-1 size-1.5 rounded-full border border-[#999] bg-[#ccc]" />
      </div>
      <div className="mt-1 ml-0.5 flex h-[26px] shrink-0 items-stretch overflow-hidden border-t border-[#858585]">
        <button type="button" aria-label="Feature tree" className="flex w-10 shrink-0 items-center justify-center border-r border-b border-[#858585] bg-[#d4d4d4]"><PartI /></button>
        <button type="button" aria-label="Properties" className="flex w-10 shrink-0 items-center justify-center border-r border-[#858585]"><ListI /></button>
        <button type="button" aria-label="Configurations" className="flex w-10 shrink-0 items-center justify-center border-r border-b border-[#858585] bg-[#d4d4d4]"><TreeI /></button>
        <button type="button" aria-label="DimXpert manager" className="flex w-10 shrink-0 items-center justify-center border-r border-b border-[#858585] bg-[#d4d4d4]"><TargetI /></button>
        <button type="button" aria-label="Display manager" className="flex w-[30px] shrink-0 items-center justify-end border-b border-[#858585] bg-[#d4d4d4]"><BallI /></button>
        <button type="button" aria-label="Previous tabs" className="mt-1.5 flex w-[19px] shrink-0 items-center justify-center border border-[#bbb] border-b-[#858585] bg-[#f7f7f7]"><svg width="4" height="6" viewBox="0 0 4 6"><path d="M4 0v6L0 3z" /></svg></button>
        <button type="button" aria-label="Next tabs" className="mt-1.5 flex flex-1 items-center justify-center border border-l-0 border-[#bbb] border-b-[#858585] bg-[#f7f7f7]"><svg width="4" height="6" viewBox="0 0 4 6"><path d="M0 0v6l4-3z" /></svg></button>
      </div>
      <div className="mt-1.5 flex h-[22px] shrink-0 items-center pr-[13px] pl-2">
        <DimIcon /><h2 className="ml-1.5 text-[11px] font-bold text-[#333]">Dimension</h2>
        <button type="button" aria-label="Help" className="ml-auto"><HelpI /></button>
      </div>
      <button type="button" aria-label="OK" className="mt-2 ml-2 w-4 shrink-0">
        <svg width="15" height="14" viewBox="0 0 15 14" fill="none" stroke="#3f9b22" strokeWidth="2.400"><path d="M1 8l3.500 4L13.500 2" /></svg>
      </button>
      <div className="mt-4 ml-0.5 flex h-6 shrink-0 items-stretch text-[11px] text-[#444]">
        <button type="button" className="w-[41px] border-t border-r border-[#858585]">Value</button>
        <button type="button" className="w-[52px] border border-l-0 border-[#858585] bg-[#d4d4d4]">Leaders</button>
        <button type="button" className="w-[42px] border border-l-0 border-[#858585] bg-[#d4d4d4]">Other</button>
        <span className="flex-1 border-b border-[#aaa]" />
      </div>
      <div className="mt-[18px] mb-1 flex min-h-0 flex-1">
        <div className="w-[209px] shrink-0 overflow-hidden">
          <Group title="Style" first>
            <div className="ml-[34px] flex">
              <Sq label="Apply defaults"><Ic><path d="M2 9h5l2 2v8H2z" fill="#fff" stroke="#333" strokeWidth="1.200" /><path d="M3 6q1-4 5-3" stroke={B} strokeWidth="1.800" /><path d="M7 0l4 3-4 3z" fill={B} /><path d="M11 10l8-8M10 6l4 6M16 1l3 5" stroke="#222" strokeWidth="1.500" /></Ic></Sq>
              <Sq label="Add style" className="-ml-px"><StarI><path d="M14.500 10v9M10 14.500h9" stroke="#3f9b22" strokeWidth="2.600" /></StarI></Sq>
              <Sq label="Delete style" className="-ml-px"><StarI><path d="M12 12l6 7M18 12l-6 7" stroke="#d33422" strokeWidth="2.200" /></StarI></Sq>
              <Sq label="Save style" className="-ml-px"><StarI><path d="M8 9h11v10H8z" fill="#e8eef1" stroke="#24475a" strokeWidth="1.400" /><path d="M11 9v4h5V9M11 19v-3h5v3" stroke="#24475a" strokeWidth="1.200" /></StarI></Sq>
              <Sq label="Load style" className="-ml-px"><StarI><path d="M15 10v5" stroke="#222" strokeWidth="3" /><path d="M11 14.500h8l-4 4.500z" fill="#222" /></StarI></Sq>
            </div>
            <Drop label="Style" value="<NONE>" className="mt-[5px] mb-[9px] ml-[39px]" />
          </Group>
          <Group title="Tolerance/Precision">
            <div className="flex items-center">
              <NumberGlyph rows={[["+.01", true], ["1.50", false], ["-.01", true]]} />
              <Drop label="Tolerance type" value="None" />
            </div>
            <div className="mt-[7px] mb-[9px] flex items-center">
              <NumberGlyph rows={[[".01", false], ["X.XXX", true], [".01", false]]} />
              <Drop label="Precision" value=".12 (Document)" />
            </div>
          </Group>
          <Group title="Primary Value">
            <div className="ml-[39px]">
              <input aria-label="Dimension name" defaultValue="D1@Sketch9" className="block h-5 w-[156px] border border-[#777] bg-white px-[5px] text-[11px]" />
              <div className="mt-2 mb-[10px] flex items-center gap-1">
                <input aria-label="Dimension value" defaultValue="10.00mm" className="block h-[23px] w-[135px] border border-[#777] bg-white px-[5px] pb-1 text-[11px]" />
                <span className="flex flex-col gap-1 bg-[#efefef] px-px">
                  <button type="button" aria-label="Increase"><svg width="10" height="7" viewBox="0 0 12 8" fill="none" stroke="#444" strokeWidth="2"><path d="M1.500 6.500L6 2l4.500 4.500" /></svg></button>
                  <button type="button" aria-label="Decrease"><svg width="10" height="7" viewBox="0 0 12 8" fill="none" stroke="#444" strokeWidth="2"><path d="M1.500 1.500L6 6l4.500-4.500" /></svg></button>
                </span>
              </div>
            </div>
          </Group>
          <Group title="Dimension Text">
            <div className="ml-1 flex gap-[2px]">
              <div className="flex flex-col gap-[3px]">
                <Sq label="Add parentheses"><Ic><path d="M4 4q-4 6 0 12M16 4q4 6 0 12" stroke={B} strokeWidth="1.800" /><path d="M4.500 7l4.500 6M9 7l-4.500 6M11 7l4.500 6M15.500 7L11 13" stroke="#333" strokeWidth="1.400" /></Ic></Sq>
                <Sq label="Inspection dimension"><Ic><rect x="1" y="4" width="18" height="12" rx="6" stroke={B} strokeWidth="1.900" /><path d="M4.500 7l4.500 6M9 7l-4.500 6M11 7l4.500 6M15.500 7L11 13" stroke="#333" strokeWidth="1.400" /></Ic></Sq>
              </div>
              <textarea aria-label="Dimension text" defaultValue="<MOD-DIAM><DIM>" className="h-[53px] w-[167px] resize-none border border-[#999] bg-white px-0.5 text-[11px] leading-[13px]" />
            </div>
            <div className="mt-[7px] ml-1 flex gap-px">
              <Sq label="Center dimension"><Ic><path d="M0 10h6M14 10h6" stroke="#222" strokeWidth="1.800" /><path d="M4 7v6l-4-3zM16 7v6l4-3z" fill="#222" /><path d="M7.500 7l5 6M12.500 7l-5 6" stroke={B} strokeWidth="1.600" /></Ic></Sq>
              <Sq label="Offset text"><Ic><path d="M1 16h17M5 15l6-6h3M13 2l5 6M18 2l-5 6" stroke={B} strokeWidth="1.300" /><path d="M2 16h16" stroke="#222" strokeWidth="2" /><path d="M4 13v6l-4-3zM16 13v6l4-3z" fill="#222" /></Ic></Sq>
            </div>
            <div className="mt-[2px] ml-1 flex gap-px">
              <Sq label="Left justify"><Align d="M1 3h18M1 6h11M1 9h18M1 12h11M1 15h18M1 18h11" /></Sq>
              <Sq label="Center justify" on><Align d="M1 3h18M4 6h12M1 9h18M4 12h12M1 15h18M4 18h12" /></Sq>
              <Sq label="Right justify"><Align d="M1 3h18M8 6h11M1 9h18M8 12h11M1 15h18M8 18h11" /></Sq>
              <Sq label="Top justify"><XX a={3} b={11} arrows={5} /></Sq>
              <Sq label="Middle justify" on><XX a={4} b={12} arrows={10} /></Sq>
              <Sq label="Bottom justify"><XX a={3} b={12} arrows={14} /></Sq>
            </div>
            <div className="mt-px ml-1 flex gap-px">
              <Sq label="Diameter"><Ic><circle cx="10" cy="10" r="5.500" stroke="#222" strokeWidth="1.800" /><path d="M5 17L15 2" stroke="#222" strokeWidth="1.600" /></Ic></Sq>
              <Sq label="Degree"><Ic><circle cx="14" cy="6.500" r="2.500" stroke="#222" strokeWidth="1.600" /></Ic></Sq>
              <Sq label="Plus minus"><Ic><path d="M10 2v10M5 7.500h10M5 14.500h10" stroke="#222" strokeWidth="1.800" /></Ic></Sq>
              <Sq label="Centerline"><Ic><path d="M8 12a5 5 0 1 1 4 0M10 6v11M10 12h4" stroke="#222" strokeWidth="1.800" /></Ic></Sq>
            </div>
          </Group>
        </div>
        <div className="flex w-[15px] shrink-0 flex-col items-center" aria-hidden="true">
          <Chevron className="my-1" />
          <div className="h-3/4 w-full bg-[#cdcdcd]" />
          <Chevron down className="mt-auto mb-1" />
        </div>
      </div>
      <div className="absolute top-[265px] left-[228px] z-10 flex h-[39px] w-2.5 items-center justify-center border border-l-0 border-[#858585] bg-[#f7f7f7]">
        <span className="size-[5px] rounded-full border border-[#999]" />
      </div>
    </aside>
  );
}

/* ---------- graphics area ---------- */

const hud: [string, React.ReactNode, boolean][] = [
  ["Zoom to fit", <ZoomFitI />, false], ["Zoom to area", <MagI dashed />, false], ["Previous view", <PrevViewI />, false], ["Section view", <SectionI />, false], ["Annotation views", <DynI />, false],
  ["View orientation", <OrientI />, true], ["Display style", <StyleCubeI />, true], ["Hide/show items", <EyeI />, true], ["Edit appearance", <GhostI />, false], ["Apply scene", <BallI strip />, true], ["View settings", <ScreenI />, true],
];

const Handle = ({ y }: { y: number }) => (
  <g><circle cx="1221.500" cy={y} r="3" fill="#7fb2ec" stroke="#15233a" strokeWidth="1.200" /><path d={`M1219.500 ${y}h4`} stroke="#15233a" /></g>
);

function Model() {
  return (
    <svg viewBox="230 140 1132 592" className="absolute inset-0 size-full" aria-label="Part model">
      <defs>
        <linearGradient id="block" x1="0" y1="0" x2="0" y2="1"><stop offset="0" stopColor="#51535d" /><stop offset=".85" stopColor="#51535d" /><stop offset="1" stopColor="#646672" /></linearGradient>
      </defs>
      <rect x="560" y="255.500" width="470" height="338" fill="url(#block)" stroke="#0c0c14" strokeWidth="1.400" />
      <circle cx="795.500" cy="424.500" r="253.500" fill="#51535d" stroke="#05060a" strokeWidth="1.800" />
      <circle cx="795" cy="424.500" r="94" fill="#383856" stroke="#030308" strokeWidth="2" />
      <g stroke="#5c9fe0" strokeWidth="1.200"><path d="M798 330.500h432M798 518.500h432" /><path d="M1221.500 330v108M1221.500 459v59" strokeWidth="1.800" stroke="#8fbfec" /></g>
      <rect x="795.500" y="327.500" width="6" height="6" fill="#6aa5ee" stroke="#0a0a14" /><rect x="795.500" y="515.500" width="6" height="6" fill="#6aa5ee" stroke="#0a0a14" />
      <circle cx="1221" cy="330.500" r="4" fill="#1010b8" />
      <Handle y={339.500} /><Handle y={439.500} /><Handle y={509.500} />
      <g fill="none" stroke="#5c9fe6" strokeWidth="1.500"><circle cx="1201" cy="449" r="5.200" /><path d="M1197 456l8-14" /></g>
      <text x="1210" y="455" className="fill-[#5c9fe6] font-['Lato',sans-serif] text-[16px] font-bold">10.00</text>
      <text x="436" y="398" className="fill-white/65 font-['Liberation_Serif','Noto_Sans_CJK_SC',serif] text-[48px] font-light"><tspan className="text-[49px]">莫西网</tspan>www.3dmox.com</text>
      <path d="M795.500 425v-26M795 424.500h10" stroke="#dd1428" strokeWidth="1.400" /><path d="M795.500 391l3 9h-6zM813 424.500l-9 3v-6z" fill="#ee1020" />
      <rect x="789" y="432" width="12" height="12" fill="#22b84c" /><path d="M792 435l6 6M798 435l-6 6M791 442v-8h8M799 436v6h-6" stroke="#083d18" strokeWidth="1" fill="none" />
    </svg>
  );
}

const paneTools: [string, React.ReactNode][] = [
  ["Resources", <HomeI />], ["Design library", <BooksI />], ["File explorer", <FolderI />], ["View palette", <PaletteI />],
  ["Appearances", <PaneBallI />], ["Custom properties", <ListI />], ["Sync", <SyncI />], ["Forum", <ChatI />],
];

function GraphicsArea() {
  return (
    <main className="relative min-w-0 flex-1 overflow-hidden">
      <Model />
      <div className="absolute top-1.5 left-1.5 flex items-center text-[11px] whitespace-pre">
        <svg width="5" height="8" viewBox="0 0 5 8" aria-hidden="true"><path d="M0 0v8l5-4z" fill="#222" /></svg>
        <span className="ml-2.5 flex"><PartTreeI /></span>
        <span className="ml-1">{"Part2  (Default<<Default>..."}</span>
      </div>
      <div className="absolute inset-x-0 top-[5px] flex justify-center pl-[3px]">
        {hud.map(([n, i, c]) => (
          <button key={n} type="button" aria-label={n} className={"flex items-center gap-1.5 " + (c ? "w-10" : "w-[26px]")}>{i}{c && <Caret className="opacity-60" />}</button>
        ))}
      </div>
      <div className="absolute top-[30px] right-[27px] opacity-70">
        <svg width="76" height="62" viewBox="0 0 76 62" fill="none" aria-hidden="true">
          <path d="M24 5H4v17q0 8 8 8h14" stroke="#b3c2d0" strokeWidth="2" /><path d="M26 29l11-9v5q8-1 11-7-1 12-11 13v6z" fill="#a9c4d6" stroke="#94aabb" />
          <path d="M51 40l5-5 6 6 6-6 5 5-6 7 6 6-5 5-6-6-6 6-5-5 6-6z" fill="#e5929c" stroke="#c9959e" />
        </svg>
      </div>
      <div className="absolute top-[29px] right-0 flex flex-col border-t border-l border-[#858585]">
        {paneTools.map(([n, i]) => (
          <button key={n} type="button" aria-label={n} className={"flex h-6 w-[21px] items-center justify-start overflow-hidden border-b border-[#858585] pl-0.5 " + (n === "Appearances" ? "bg-white" : "bg-[#d4d4d4]")}>{i}</button>
        ))}
      </div>
      <div className="absolute bottom-0 left-2.5 font-['Lato',sans-serif] text-[13px] font-black">
        <svg width="80" height="52" viewBox="0 0 80 52" fill="none" aria-hidden="true">
          <text x="24" y="10" className="fill-[#2424b0] text-[11px] font-normal">Z</text><text x="60" y="46" className="fill-[#c01828] text-[11px] font-normal">X</text>
          <path d="M30 42V21" stroke="#3a3ad0" strokeWidth="3" /><path d="M30 11l4 11h-8z" fill="#1818a8" /><path d="M30 42h22" stroke="#d63a44" strokeWidth="3" /><path d="M61 42l-10 4v-8z" fill="#b01020" />
        </svg>
        <div className="pt-[30px] leading-[18px]">*Bottom</div>
      </div>
    </main>
  );
}

/* ---------- bottom bars ---------- */

function BottomTabs() {
  return (
    <div className="flex h-4 shrink-0 items-stretch border-t border-[#858585] bg-[#f7f7f7] text-[11px] leading-[13px]">
      <div className="flex w-[67px] gap-px bg-[#9f9f9f] p-px">
        {["M3 2v8M11 2L5 6l6 4z", "M10 2L4 6l6 4z", "M4 2l6 4-6 4z", "M11 2v8M3 2l6 4-6 4z"].map((d) => (
          <button key={d} type="button" aria-label="Tab navigation" className="flex flex-1 items-center justify-center bg-[#b0b0b0]"><svg width="14" height="12" viewBox="0 0 14 12" fill="#969696" stroke="#969696"><path d={d} /></svg></button>
        ))}
      </div>
      <button type="button" className="w-[57px] border-r border-[#858585] font-bold">Model</button>
      <button type="button" className="w-[67px] border-r border-[#858585] bg-[#d4d4d4] whitespace-nowrap">3D Views</button>
      <button type="button" className="w-[109px] border-r border-[#858585] bg-[#d4d4d4] pr-2 whitespace-nowrap">Motion Study 1</button>
    </div>
  );
}

function StatusBar() {
  return (
    <footer className="flex h-[17px] shrink-0 items-center border-t border-[#858585] bg-[#f7f7f7] pl-px text-[11px] leading-4 whitespace-nowrap">
      <span className="pt-0.5">Set the properties of the selected dimension(s).</span>
      <div className="ml-auto flex h-full items-center pt-0.5">
        <span className="w-[76px] border-r border-[#ccc]">Fully Defined</span>
        <span className="ml-1.5 w-[92px] border-l border-r border-[#ccc] pl-[3px]">Editing Sketch9</span>
        <span className="flex w-8 justify-end border-r border-[#ccc] pr-[2px]"><TrafficI s={14} /></span>
        <button type="button" className="ml-8 flex w-[60px] items-center justify-between">MMGS<Caret className="rotate-180" /></button>
        <span className="ml-[66px] flex"><Ic s={16}><path d="M1 9l8-6 9 5-7 8-8-2zM5 9l7 3M7 7l7 3M11 16l2-4" stroke="#555" strokeWidth="1.500" fill="#eee" /></Ic></span>
      </div>
    </footer>
  );
}

export default function App() {
  return (
    <div className="flex h-screen flex-col overflow-hidden bg-white font-['Noto_Sans','Noto_Sans_CJK_SC',sans-serif] text-[#111]">
      <TitleBar />
      <Ribbon />
      <div className="flex min-h-0 flex-1 flex-col bg-[radial-gradient(50%_45%_at_100%_100%,#eff0f5,transparent),linear-gradient(to_bottom,transparent_56%,white_70%),radial-gradient(42%_90%_at_86%_40%,#dadde8,#e4e6ee_50%,transparent),linear-gradient(to_bottom,transparent_33%,#e2e5ee_57%)]">
        <CommandTabs />
        <div className="flex min-h-0 flex-1">
          <PropertyManager />
          <GraphicsArea />
        </div>
      </div>
      <BottomTabs />
      <StatusBar />
    </div>
  );
}
